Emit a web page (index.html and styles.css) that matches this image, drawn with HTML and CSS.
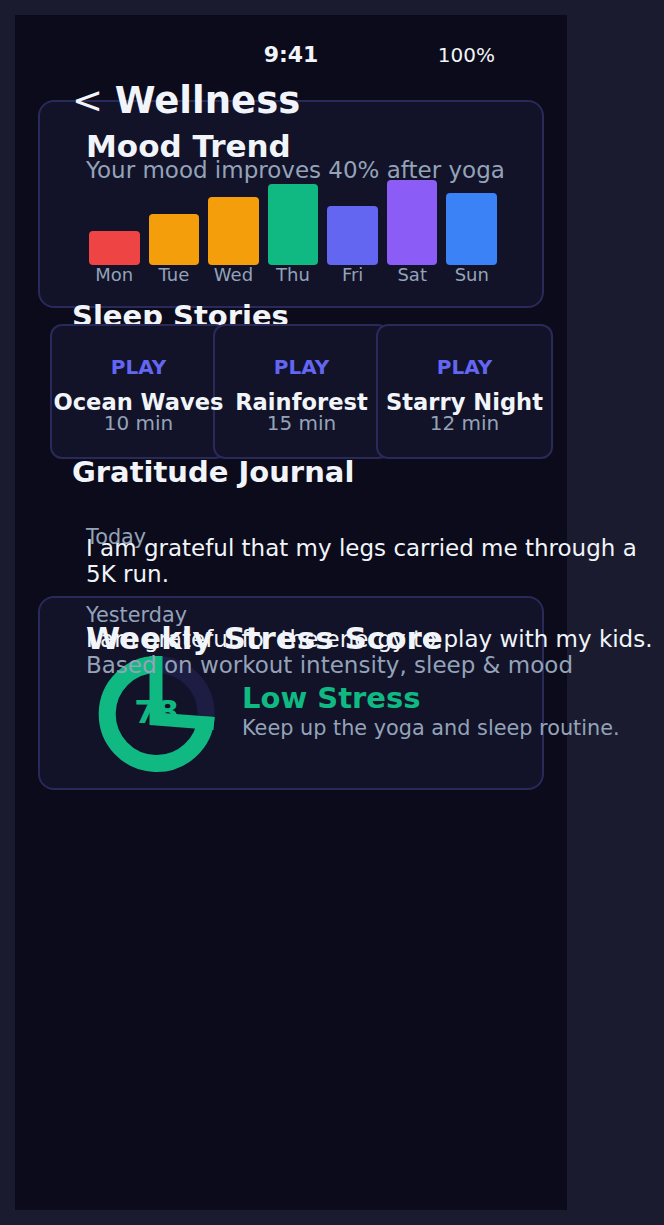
FILE: index.html
```html
<!DOCTYPE html>
<html lang="en">
<head>
<meta charset="utf-8">
<title>Wellness</title>
<link rel="stylesheet" href="styles.css">
</head>
<body>
<div class="phone">
  <div class="status">
    <span></span>
    <span class="time">9:41</span>
    <span class="battery">100%</span>
  </div>
  <h1 class="page-title"><span class="back">&lt; </span>Wellness</h1>

  <section class="card mood">
    <h2 class="card-title">Mood Trend</h2>
    <p class="card-sub">Your mood improves 40% after yoga</p>
    <div class="chart">
      <div class="col"><div class="bar-area"><div class="bar red" style="height:40%"></div></div><span class="day">Mon</span></div>
      <div class="col"><div class="bar-area"><div class="bar amber" style="height:60%"></div></div><span class="day">Tue</span></div>
      <div class="col"><div class="bar-area"><div class="bar amber" style="height:80%"></div></div><span class="day">Wed</span></div>
      <div class="col"><div class="bar-area"><div class="bar green" style="height:95%"></div></div><span class="day">Thu</span></div>
      <div class="col"><div class="bar-area"><div class="bar indigo" style="height:70%"></div></div><span class="day">Fri</span></div>
      <div class="col"><div class="bar-area"><div class="bar violet" style="height:100%"></div></div><span class="day">Sat</span></div>
      <div class="col"><div class="bar-area"><div class="bar blue" style="height:85%"></div></div><span class="day">Sun</span></div>
    </div>
  </section>

  <h2 class="section-title">Sleep Stories</h2>
  <div class="stories">
    <div class="story"><div class="story-body"><div class="play">PLAY</div><div class="story-name">Ocean Waves</div><div class="story-len">10 min</div></div></div>
    <div class="story"><div class="story-body"><div class="play">PLAY</div><div class="story-name">Rainforest</div><div class="story-len">15 min</div></div></div>
    <div class="story"><div class="story-body"><div class="play">PLAY</div><div class="story-name">Starry Night</div><div class="story-len">12 min</div></div></div>
  </div>

  <h2 class="section-title">Gratitude Journal</h2>
  <div class="journal">
    <div class="entry"><span class="entry-date">Today</span><p class="entry-text">I am grateful that my legs carried me through a 5K run.</p></div>
    <div class="entry"><span class="entry-date">Yesterday</span><p class="entry-text">I am grateful for the energy to play with my kids.</p></div>
  </div>

  <section class="card stress">
    <h2 class="card-title">Weekly Stress Score</h2>
    <p class="card-sub stress-sub">Based on workout intensity, sleep &amp; mood</p>
    <div class="stress-row">
      <svg class="ring" width="140" height="140" viewBox="0 0 140 140">
        <circle cx="70.7" cy="70" r="49.5" fill="none" stroke="#1d1d44" stroke-width="17"/>
        <path d="M120.13 72.59 A49.5 49.5 0 1 1 70.7 20.5" fill="none" stroke="#10b981" stroke-width="17"/>
        <text x="70.5" y="79.3" text-anchor="middle" class="ring-num">78</text>
        <polyline points="70,12 70,75 128,79.5" fill="none" stroke="#10b981" stroke-width="13" stroke-linejoin="miter"/>
      </svg>
      <div class="stress-text">
        <div class="stress-level">Low Stress</div>
        <div class="stress-tip">Keep up the yoga and sleep routine.</div>
      </div>
    </div>
  </section>
</div>
</body>
</html>
```

FILE: styles.css
```css
* { box-sizing: border-box; }

html, body {
  margin: 0;
  padding: 0;
}

body {
  background: #1b1b2f;
  padding: 15px;
  font-family: "DejaVu Sans", "Noto Sans", sans-serif;
  color: #f1f5f9;
}

.phone {
  width: 552px;
  height: 1195px;
  background: #0b0b1b;
  padding: 27px 23px 0;
}

.status {
  display: grid;
  grid-template-columns: 1fr auto 1fr;
  align-items: baseline;
  padding: 0 49px;
  line-height: 26px;
  height: 26px;
}

.time {
  font-size: 22px;
  font-weight: 700;
}

.battery {
  font-size: 20px;
  justify-self: end;
}

.page-title {
  margin: 13px 0 0;
  padding-left: 34px;
  font-size: 37px;
  line-height: 40px;
  font-weight: 700;
}

.back {
  font-weight: 400;
}

.card {
  background: #121229;
  border: 2px solid #29295a;
  border-radius: 16px;
  padding: 0 0 0 46px;
}

.card-title {
  margin: 0;
  font-size: 31px;
  line-height: 30px;
  font-weight: 700;
}

.card-sub {
  margin: 0;
  font-size: 23px;
  color: #94a3b8;
  white-space: nowrap;
}

.mood {
  margin-top: -21px;
  padding-top: 29px;
  padding-bottom: 21px;
}

.mood .card-sub {
  line-height: 19px;
}

.chart {
  display: flex;
  gap: 9px;
  width: 408px;
  margin-left: 3px;
}

.col {
  flex: 1;
  display: flex;
  flex-direction: column;
  align-items: center;
}

.bar-area {
  height: 85px;
  width: 100%;
  display: flex;
  align-items: flex-end;
}

.bar {
  width: 100%;
  border-radius: 4px;
}

.red { background: #ef4444; }
.amber { background: #f59e0b; }
.green { background: #10b981; }
.indigo { background: #6366f1; }
.violet { background: #8b5cf6; }
.blue { background: #3b82f6; }

.day {
  font-size: 18px;
  line-height: 20px;
  color: #94a3b8;
}

.section-title {
  margin: -7px 0 0;
  padding-left: 34px;
  font-size: 29px;
  line-height: 30px;
  font-weight: 700;
}

.stories {
  display: flex;
  margin: -7px 0 0 12px;
}

.story {
  flex: none;
  width: 177px;
  background: #121229;
  border: 2px solid #29295a;
  border-radius: 12px;
  padding: 29px 0 26px;
  text-align: center;
}

.story + .story {
  margin-left: -14px;
}

.story-body {
  position: relative;
  z-index: 1;
}

.play {
  font-size: 20px;
  line-height: 24px;
  font-weight: 700;
  color: #6366f1;
}

.story-name {
  margin-top: 10px;
  font-size: 22.6px;
  line-height: 26px;
  font-weight: 700;
  white-space: nowrap;
}

.story-len {
  font-size: 20px;
  line-height: 16px;
  color: #94a3b8;
}

.stories + .section-title {
  margin-top: -2px;
}

.journal {
  height: 69px;
  margin-top: 40px;
  padding-left: 48px;
}

.entry {
  display: flex;
  align-items: center;
}

.entry + .entry {
  margin-top: 10px;
}

.entry-date {
  flex: none;
  width: 0;
  white-space: nowrap;
  font-size: 20.8px;
  line-height: 20px;
  margin-bottom: 48px;
  color: #94a3b8;
}

.entry-text {
  flex: none;
  width: 574px;
  margin: 0;
  font-size: 23px;
  line-height: 26.5px;
}

.stress {
  padding-top: 25px;
  padding-bottom: 4px;
}

.stress-sub {
  position: relative;
  line-height: 24px;
}

.stress-row {
  display: flex;
  align-items: center;
  gap: 16px;
  margin-top: -33px;
}

.ring {
  display: block;
  flex: none;
}

.ring-num {
  font-family: "DejaVu Sans", sans-serif;
  font-size: 32px;
  font-weight: 700;
  fill: #10b981;
}

.stress-text {
  margin-top: -2px;
}

.stress-level {
  font-size: 29px;
  line-height: 30px;
  font-weight: 700;
  color: #10b981;
}

.stress-tip {
  font-size: 20.8px;
  line-height: 30px;
  color: #94a3b8;
  white-space: nowrap;
}
```
